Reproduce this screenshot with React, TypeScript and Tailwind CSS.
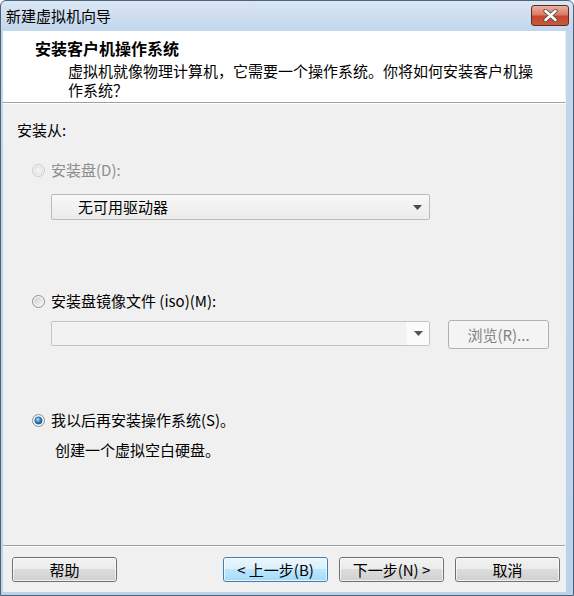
import React from "react";

const FONT = { fontFamily: '"Noto Sans CJK SC", "Noto Sans", sans-serif' };

function Radio({ state }: { state: "disabled" | "off" | "on" }) {
  if (state === "disabled") {
    return (
      <svg width="13" height="13" viewBox="0 0 13 13">
        <circle cx="6.5" cy="6.5" r="6" fill="#f4f4f4" stroke="#c8c8c8" />
        <circle cx="6.5" cy="6.5" r="4" fill="#f0f0f0" stroke="#dcdcdc" />
      </svg>
    );
  }
  return (
    <svg width="13" height="13" viewBox="0 0 13 13">
      <defs>
        <linearGradient id={"rg" + state} x1="0" y1="0" x2="1" y2="1">
          <stop offset="0" stopColor="#cbcfd5" />
          <stop offset="1" stopColor="#f6f6f6" />
        </linearGradient>
        <radialGradient id="dot" cx="0.4" cy="0.35" r="0.7">
          <stop offset="0" stopColor="#b6e0fb" />
          <stop offset="0.5" stopColor="#3a8fd0" />
          <stop offset="1" stopColor="#0e3e73" />
        </radialGradient>
      </defs>
      <circle cx="6.5" cy="6.5" r="6" fill="#f4f4f4" stroke="#8e8f8f" />
      <circle cx="6.5" cy="6.5" r="4.3" fill={"url(#rg" + state + ")"} />
      {state === "on" && <circle cx="6.5" cy="6.5" r="3.6" fill="url(#dot)" stroke="#1b4f7f" strokeWidth="0.6" />}
    </svg>
  );
}

function Arrow({ color = "#4a4a4a" }: { color?: string }) {
  return (
    <svg width="9" height="5" viewBox="0 0 9 5">
      <path d="M0 0 H9 L4.5 5 Z" fill={color} />
    </svg>
  );
}

function Btn({ children, focused }: { children: React.ReactNode; focused?: boolean }) {
  return (
    <div
      className={
        "w-[105px] h-[25px] rounded-[3px] border flex items-center justify-center text-[15px] text-black leading-none " +
        (focused
          ? "border-[#3c7fb1] bg-[linear-gradient(to_bottom,#eaf6fd_0%,#d9f0fc_50%,#bee6fd_50%,#a7d9f5_100%)]"
          : "border-[#707070] bg-[linear-gradient(to_bottom,#f2f2f2_0%,#ebebeb_50%,#dddddd_50%,#cfcfcf_100%)]")
      }
    >
      <div className="w-full h-full rounded-[2px] border border-white/70 flex items-center justify-center">{children}</div>
    </div>
  );
}

export default function App() {
  return (
    <div
      className="w-[574px] h-[596px] flex flex-col border border-[#4d6378] rounded-t-[6px] bg-[linear-gradient(to_bottom,#dbe6f3_0px,#c2d6ec_30px,#bcd2ea_100%)] overflow-hidden"
      style={FONT}
    >
      {/* Title bar */}
      <div className="h-[30px] shrink-0 flex items-start justify-between">
        <div className="pl-[5px] pt-[5px] text-[15px] leading-[20px] text-black">新建虚拟机向导</div>
        <div className="mt-[4px] mr-[4px] w-[38px] h-[21px] rounded-[3px] border border-[#5b2b22] bg-[linear-gradient(to_bottom,#eab0a2_0%,#db7c66_45%,#c7452c_55%,#c85a3c_100%)] flex items-center justify-center">
          <svg width="15" height="13" viewBox="0 0 15 13">
            <path d="M2.5 2 L12.5 11 M12.5 2 L2.5 11" stroke="#4b4b4b" strokeWidth="4.2" strokeLinecap="round" />
            <path d="M2.5 2 L12.5 11 M12.5 2 L2.5 11" stroke="#ffffff" strokeWidth="2.6" strokeLinecap="round" />
          </svg>
        </div>
      </div>

      {/* Client area */}
      <div className="flex-1 ml-[2px] mr-[7px] mb-[3px] flex flex-col bg-[#f0f0f0] border-r border-[#e9eff6]">
        {/* Header */}
        <div className="h-[72px] shrink-0 bg-white border-b border-[#a0a0a0]">
          <div className="pl-[32px] pt-[7px] text-[16px] font-bold leading-[20px] text-black">安装客户机操作系统</div>
          <div className="pl-[65px] pt-[3px] pr-[20px] text-[15px] leading-[19px] text-black">
            虚拟机就像物理计算机，它需要一个操作系统。你将如何安装客户机操作系统？
          </div>
        </div>
        <div className="h-px bg-white shrink-0" />

        {/* Body */}
        <div className="flex-1 flex flex-col pl-[14px] pt-[16px] text-[15px] leading-[20px] text-black">
          <div>安装从:</div>

          <div className="mt-[20px] ml-[15px] flex items-center gap-[6px] h-[20px]">
            <Radio state="disabled" />
            <span className="text-[#8d8d8d]">安装盘(D):</span>
          </div>

          <div className="mt-[14px] ml-[34px] w-[379px] h-[26px] rounded-[2px] border border-[#bcbcbc] bg-[linear-gradient(to_bottom,#f7f7f7,#ececec)] flex items-center justify-between pl-[26px] pr-[7px]">
            <span>无可用驱动器</span>
            <Arrow />
          </div>

          <div className="mt-[71px] ml-[15px] flex items-center gap-[6px] h-[20px]">
            <Radio state="off" />
            <span>安装盘镜像文件 (iso)(M):</span>
          </div>

          <div className="mt-[9px] ml-[34px] flex items-start gap-[18px] h-[30px]">
            <div className="mt-px w-[379px] h-[25px] rounded-[2px] border border-[#c3c3c3] bg-[#f4f4f4] flex items-stretch">
              <div className="flex-1 bg-[#f2f2f2] border-r border-[#f8f8f8]" />
              <div className="w-[22px] bg-[#fbfbfb] flex items-center justify-center">
                <Arrow color="#555" />
              </div>
            </div>
            <div className="w-[101px] h-[29px] rounded-[3px] border border-[#adb2b5] bg-[#f4f4f4] flex items-center justify-center text-[#838383]">
              浏览(R)...
            </div>
          </div>

          <div className="mt-[60px] ml-[15px] flex items-center gap-[6px] h-[20px]">
            <Radio state="on" />
            <span>我以后再安装操作系统(S)。</span>
          </div>
          <div className="mt-[10px] ml-[38px]">创建一个虚拟空白硬盘。</div>
        </div>

        {/* Footer */}
        <div className="shrink-0 border-t border-[#a0a0a0]">
          <div className="h-px bg-white" />
          <div className="flex items-center pl-[9px] pr-[5px] pt-[10px] pb-[10px]">
            <Btn>帮助</Btn>
            <div className="flex-1" />
            <div className="flex gap-[11px]">
              <Btn focused>&lt; 上一步(B)</Btn>
              <Btn>下一步(N) &gt;</Btn>
              <Btn>取消</Btn>
            </div>
          </div>
        </div>
      </div>
    </div>
  );
}
